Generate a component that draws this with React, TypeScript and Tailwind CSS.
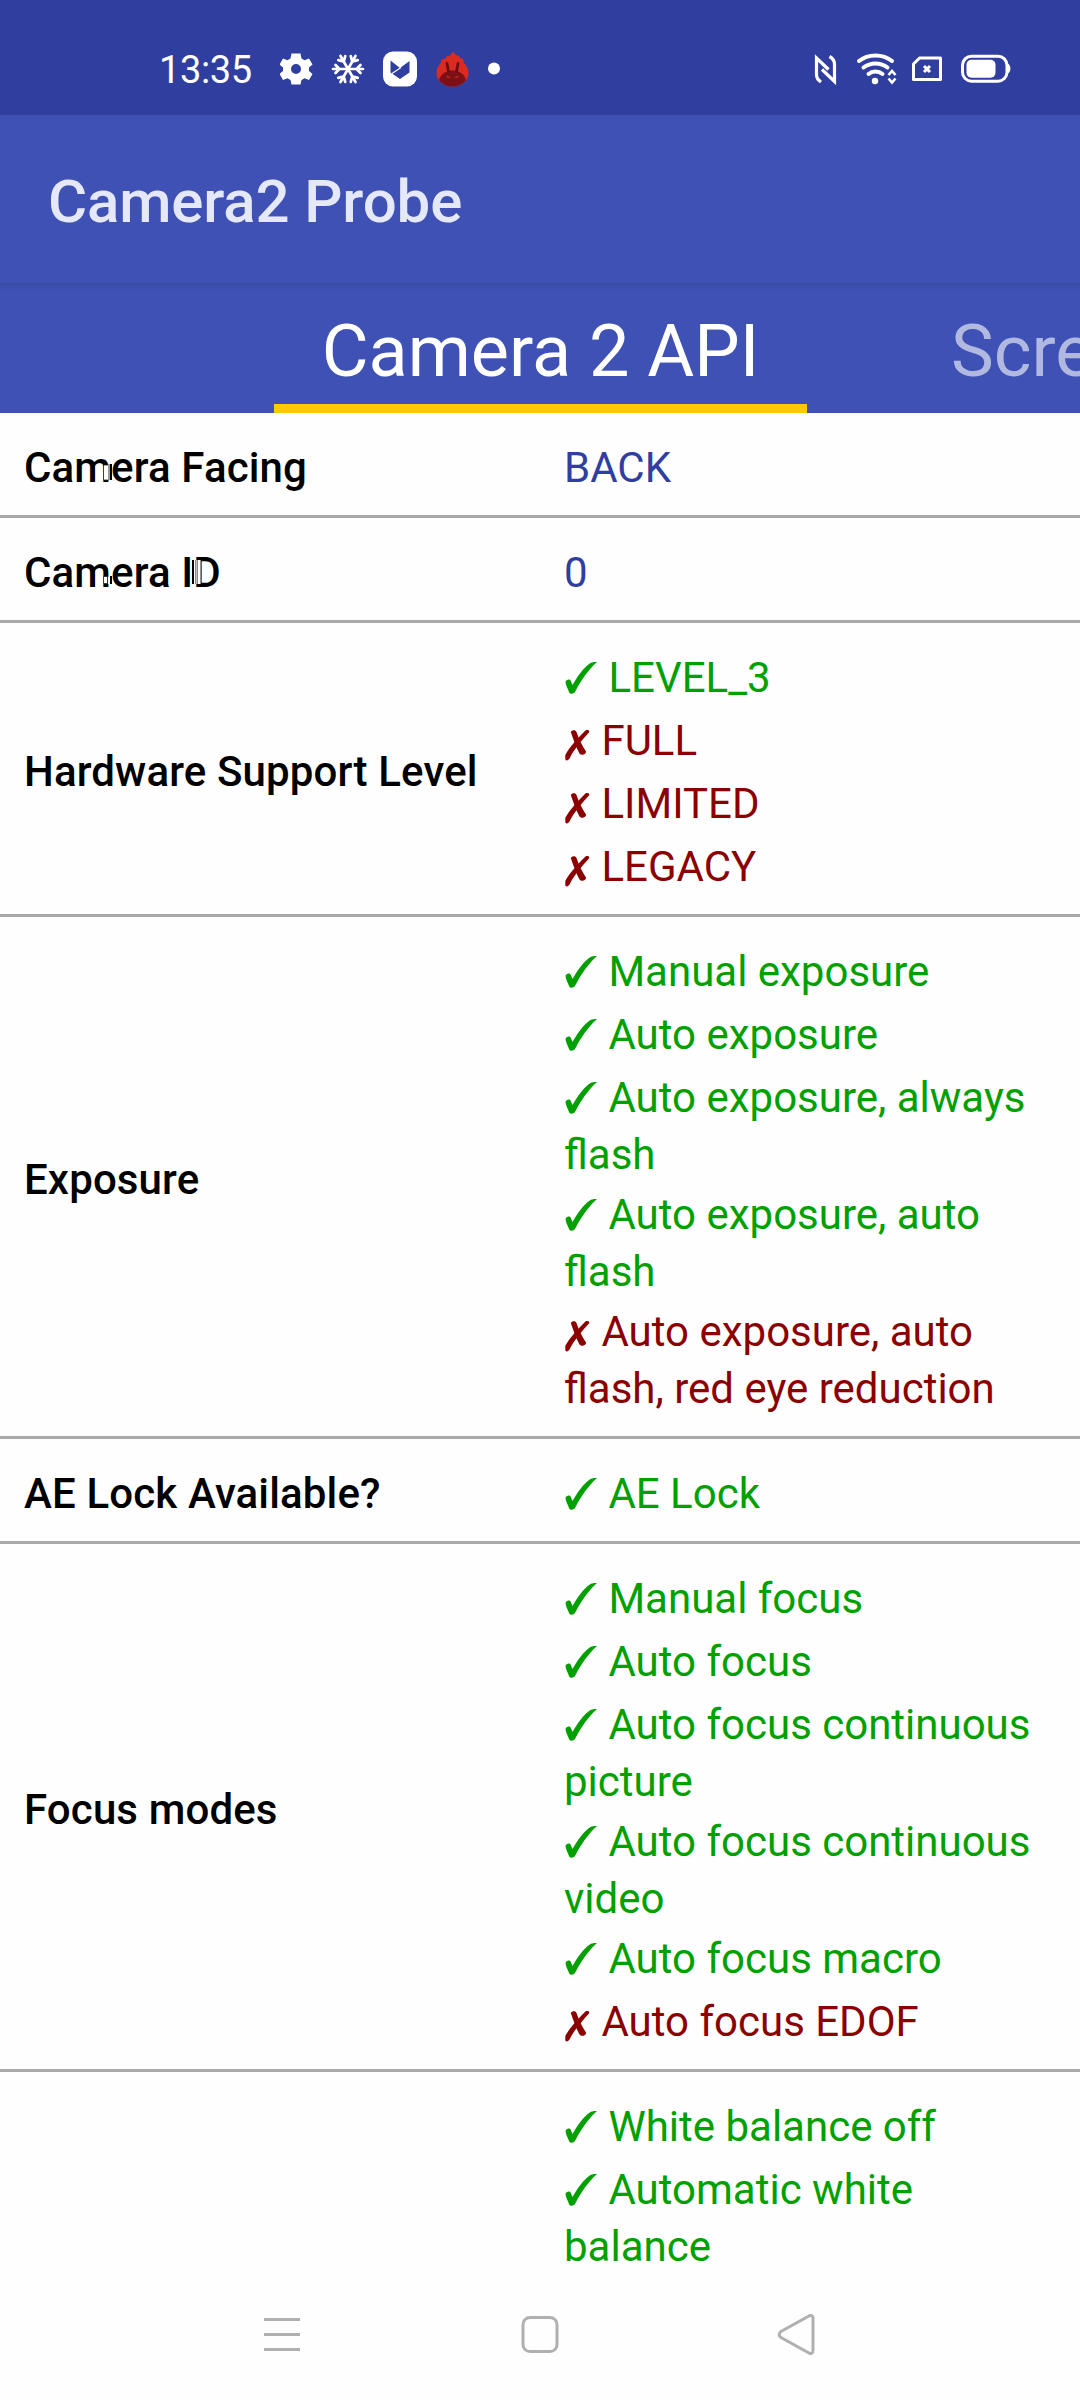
import { Fragment } from 'react'
import type { ReactNode } from 'react'

interface Item {
  ok: boolean
  lines: string[]
}

interface ProbeRow {
  label: string
  value?: string
  items?: Item[]
  noise?: ReactNode
}

const rows: ProbeRow[] = [
  {
    label: 'Camera Facing',
    value: 'BACK',
    noise: (
      <>
        <path d="M79.500 26h5v15h-5z" fill="#fff" stroke="#222" strokeWidth="0.800" />
        <path d="M84 25h2v16h-2z" fill="#999" />
        <path d="M86 25h2v16h-2z" fill="#000" />
      </>
    ),
  },
  {
    label: 'Camera ID',
    value: '0',
    noise: (
      <>
        <path d="M79.500 32.500h4v7h-4z" fill="#fff" stroke="#222" strokeWidth="0.800" />
        <path d="M84 33h2v7h-2z" fill="#fff" />
        <path d="M86 32h2v8h-2z" fill="#000" />
        <path d="M168 16h2v24h-2z" fill="#000" />
        <path d="M171 16h6v24h-6z" fill="#fff" />
        <path d="M171 16h1.500v24h-1.500zM173 16h1v24h-1z" fill="#888" />
        <path d="M176.500 16h0.800v24h-0.800z" fill="#222" />
      </>
    ),
  },
  {
    label: 'Hardware Support Level',
    items: [
      { ok: true, lines: ['LEVEL_3'] },
      { ok: false, lines: ['FULL'] },
      { ok: false, lines: ['LIMITED'] },
      { ok: false, lines: ['LEGACY'] },
    ],
  },
  {
    label: 'Exposure',
    items: [
      { ok: true, lines: ['Manual exposure'] },
      { ok: true, lines: ['Auto exposure'] },
      { ok: true, lines: ['Auto exposure, always', 'flash'] },
      { ok: true, lines: ['Auto exposure, auto', 'flash'] },
      { ok: false, lines: ['Auto exposure, auto', 'flash, red eye reduction'] },
    ],
  },
  {
    label: 'AE Lock Available?',
    items: [{ ok: true, lines: ['AE Lock'] }],
  },
  {
    label: 'Focus modes',
    items: [
      { ok: true, lines: ['Manual focus'] },
      { ok: true, lines: ['Auto focus'] },
      { ok: true, lines: ['Auto focus continuous', 'picture'] },
      { ok: true, lines: ['Auto focus continuous', 'video'] },
      { ok: true, lines: ['Auto focus macro'] },
      { ok: false, lines: ['Auto focus EDOF'] },
    ],
  },
  {
    label: '',
    items: [
      { ok: true, lines: ['White balance off'] },
      { ok: true, lines: ['Automatic white', 'balance'] },
    ],
  },
]

function StatusBar() {
  return (
    <header className="flex h-[115px] shrink-0 items-center bg-[#303f9f] pt-[23px] pr-[68px] pl-[159px] text-white">
      <span className="w-[121px] pt-0.5 text-[38px] leading-none tracking-[-0.4px]">13:35</span>
      {/* notification icons */}
      <svg width="220" height="50" viewBox="0 0 220 50">
        <path
          fill="#fff"
          fillRule="evenodd"
          d="M11.500 9.500h9l1 5 3 1.700 4.500-1.700 3.500 6-3.500 3v3.500l3.500 3-3.500 6-4.500-1.700-3 1.700-1 4.500h-9l-1-4.500-3-1.700-4.500 1.700-3.500-6 3.500-3v-3.500l-3.500-3 3.500-6 4.500 1.700 3-1.700zM16 20a5 5 0 1 0 0 10a5 5 0 1 0 0-10z"
        />
        <g stroke="#fff" strokeWidth="2.700" strokeLinecap="round" fill="none">
          {[30, 90, 150, 210, 270, 330].map((angle) => (
            <path key={angle} transform={`rotate(${angle} 68 25)`} d="M68 25V10M64 12.500l4 4 4-4" />
          ))}
        </g>
        <rect x="103" y="7.500" width="34" height="35" rx="10" fill="#fff" />
        <path fill="#303f9f" d="M110.500 16.500l9.500 7.500 9.500-7v11.500l-9.500 6.500-9.500-6.500z" />
        <path d="M112 29.500l9-6" stroke="#fff" strokeWidth="1.200" />
        <path
          fill="#d92b22"
          d="M173 7.500c2 3 4 4 6 4.500l1 2 3 1 1 4c3 3 4.500 6 4.500 10 0 8-7 13.500-16 13.500S156.500 37 156.500 29c0-4 1.500-7 4-9.500l1-4 4-1 1.500-3 3 .5z"
        />
        <path fill="#7d1014" d="M159 36c2-7 8-9.500 13.500-9.500s11.500 2.500 13.500 9.500c-3 4-7.500 6.500-13.500 6.500S162 40 159 36z" />
        <path d="M167 19.500l1.500 8M178 19.500l-1.500 8" stroke="#6d0d12" strokeWidth="2.800" strokeLinecap="round" />
        <path d="M166.500 32.500l3.500 1M175 33.500l3.500-1" stroke="#b9261f" strokeWidth="1.500" />
        <circle cx="214" cy="24.500" r="6" fill="#fff" />
      </svg>
      <div className="flex-1" />
      {/* nfc, wifi, sim, battery */}
      <svg width="200" height="50" viewBox="0 0 200 50" fill="none" stroke="#fff">
        <path d="M9 38c-3-2-4.500-4-4.500-7V14l12 11.500M17.500 12.500c3.500 2 5 4 5 7.500v17.500L10 25.500" strokeWidth="3.200" />
        <g strokeWidth="4" strokeLinecap="round">
          <path d="M47 17c9-7.500 24-7.500 33 0" />
          <path d="M51.500 23.500c7-5.500 17-5.500 24 0" />
          <path d="M56.500 30c4-3.500 10-3.500 14 0" />
        </g>
        <circle cx="63" cy="37" r="3.200" fill="#fff" stroke="none" />
        <path d="M76.500 31l3.500-4 3.500 4M76.500 34.500l3.500 4 3.500-4" strokeWidth="2.600" />
        <path d="M101.500 20l6-6h21v21.500h-27z" strokeWidth="3" strokeLinejoin="round" />
        <path d="M112 22l6 6M118 22l-6 6" strokeWidth="3" />
        <rect x="150.500" y="12.200" width="44.500" height="25" rx="9" strokeWidth="3" />
        <rect x="154.500" y="15.800" width="29" height="18" rx="5" fill="#fff" stroke="none" />
        <path d="M196 19.500c3.200 2 3.200 8 0 10z" fill="#fff" stroke="none" />
      </svg>
    </header>
  )
}

function Mark({ ok }: { ok: boolean }) {
  return ok ? (
    <svg className="-mb-[3px] inline-block align-baseline" width="34" height="34" viewBox="0 0 34 34" fill="#00a000">
      <path d="M1.500 21C2 18.500 6 17.500 6.800 20L8.500 24C13 16 20 6 26.500 2C29 1 31 .8 33 1C26 7 17 19 11.800 29.500C10.300 33 6 34 5 31C3.500 27 2 25 1.500 21z" />
    </svg>
  ) : (
    <svg className="-mb-1.5 inline-block align-baseline" width="27" height="32" viewBox="0 0 27 32" fill="#8b0000">
      <path d="M20.500 2.500C22 .5 25.500 .5 25.300 3C19.500 9.500 10 20.500 6.300 28C5 31.500 1.500 32.500 1.300 30V26C5.500 18 14 9 20.500 2.500z" />
      <path d="M6.800 3C8 1 11.500 .5 12.500 3C14.800 10 18.500 17.500 22 22.500C22.500 25.500 17.500 27 15.500 24.500C12 18 9.300 10 6.800 3z" />
    </svg>
  )
}

function Row({ row }: { row: ProbeRow }) {
  const tall = (row.items?.length ?? 0) > 1

  return (
    <div className="flex items-center border-b-3 border-[#a9a9a9] pt-[26px] pb-[19px]">
      <div className="relative w-1/2 px-6">
        <p className={`font-medium tracking-[0.14px] text-black ${tall ? 'pb-0.5' : ''}`}>{row.label}</p>
        {row.noise && (
          <svg className="absolute top-0 left-6" width="200" height="57" viewBox="0 0 200 57">
            {row.noise}
          </svg>
        )}
      </div>
      <div className="w-1/2 px-6">
        {row.value && <p className="text-[#303f9f]">{row.value}</p>}
        {row.items && (
          <ul className="flex flex-col gap-1.5">
            {row.items.map((item, i) => (
              <li
                key={i}
                className={`whitespace-nowrap ${item.ok ? 'text-[#00a000]' : 'text-[#8b0000]'} ${item.lines.length > 1 && i < row.items!.length - 1 ? '-mb-[3px]' : ''}`}
              >
                <Mark ok={item.ok} />{' '}
                {item.lines.map((line, n) => (
                  <Fragment key={n}>
                    {n > 0 && <br />}
                    {line}
                  </Fragment>
                ))}
              </li>
            ))}
          </ul>
        )}
      </div>
    </div>
  )
}

function NavBar() {
  return (
    <nav className="h-[114px] shrink-0 bg-[#fefefe]">
      <svg width="1080" height="114" viewBox="0 18 1080 114" fill="none" stroke="#b0b0b0" strokeWidth="3">
        <path d="M264 51.500h36M264 66.500h36M264 81.500h36" />
        <rect x="523" y="49.500" width="34" height="34" rx="7" />
        <path d="M808 48.500c3-2 5-1 5 2v32c0 3-2 4-5 2l-27-15c-2.500-2-2.500-4 0-6z" />
      </svg>
    </nav>
  )
}

export default function App() {
  return (
    <div className="flex h-[2400px] w-[1080px] flex-col overflow-hidden bg-[#fefefe] font-[Roboto,sans-serif] text-[42px] leading-[57px]">
      <StatusBar />
      <div className="flex h-[168px] shrink-0 items-center bg-[#3f51b5] px-12 pt-1.5">
        <h1 className="text-[60px] leading-none font-medium tracking-[-0.15px] text-[#e4e8f8]">Camera2 Probe</h1>
      </div>
      <div className="flex h-[130px] shrink-0 overflow-hidden bg-[#3f51b5] bg-linear-to-b from-[#3a4ba6] to-[#3f51b5] to-[8px] pl-[274px] text-[72px] leading-[137px] whitespace-nowrap">
        <span className="w-[533px] shrink-0 border-b-9 border-[#ffcb00] text-center text-white">Camera 2 API</span>
        <span className="shrink-0 pl-[144px] text-[#b2b9e1]">Screen</span>
      </div>
      <main className="min-h-0 flex-1 overflow-hidden">
        {rows.map((row, i) => (
          <Row key={i} row={row} />
        ))}
      </main>
      <NavBar />
    </div>
  )
}
